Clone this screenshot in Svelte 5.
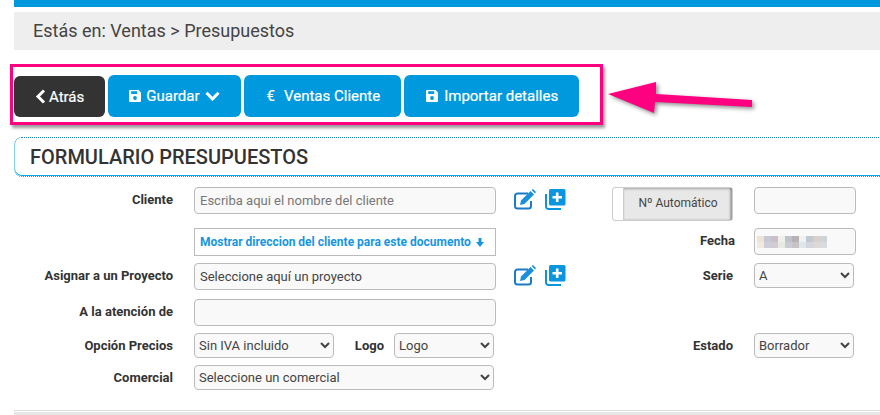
<script>
  // Pixelated date field, one colour per mosaic cell
  const dateCells = [
    "#f1e2d6", "#c6c9d3", "#c9c1c7", "#f0efe9", "#bdc3cd", "#bab1b5", "#eef2f2", "#c3c9d1", "#dacfcb", "#ced3d3",
    "#f3e8e0", "#ccced8", "#d0ccd0", "#e9e9e4", "#c9ccd3", "#c8c3c6", "#dde6e8", "#d3d6db", "#dcd8d6", "#d8dcdc",
  ];
</script>

{#snippet editIcon()}
  <svg class="ico" width="24" height="21" viewBox="0 0 24 21" aria-hidden="true">
    <path d="M15 4.500H4.500A2.500 2.500 0 0 0 2 7v10a2.500 2.500 0 0 0 2.500 2.500h11A2.500 2.500 0 0 0 18 17v-5" fill="none" stroke="#1a7cc4" stroke-width="2"/>
    <path d="M8 11.500 17.500 2l3.500 3.500-9.500 9.500L7 16z" fill="#1a90dc"/>
    <path d="M18.600 1 20 0l3 3-1 1.500z" fill="#1a90dc"/>
  </svg>
{/snippet}

{#snippet plusIcon()}
  <svg class="ico" width="21" height="21" viewBox="0 0 21 21" aria-hidden="true">
    <path d="M1 5v12.500A2.500 2.500 0 0 0 3.500 20H16" fill="none" stroke="#0a96de" stroke-width="2"/>
    <rect x="4" y="0" width="16.500" height="16.500" rx="1.500" fill="#0a96de"/>
    <path d="M12.200 3.500v9.500M7.500 8.250h9.500" stroke="#fff" stroke-width="2.600"/>
  </svg>
{/snippet}

{#snippet saveIcon()}
  <svg width="12" height="12" viewBox="0 0 12 12" aria-hidden="true">
    <path d="M1 0h8.500L12 2.500V11a1 1 0 0 1-1 1H1a1 1 0 0 1-1-1V1a1 1 0 0 1 1-1z" fill="#fff"/>
    <rect x="2.200" y="1.200" width="6" height="2.800" fill="#0099dd"/>
    <circle cx="6" cy="8" r="1.900" fill="#0099dd"/>
  </svg>
{/snippet}

<div class="page">
  <div class="topbar"></div>
  <div class="crumb">Estás en: Ventas &gt; Presupuestos</div>

  <div class="callout">
    <button class="btn dark">
      <svg width="11" height="15" viewBox="0 0 11 15" aria-hidden="true"><path d="M9 1.500 3 7.500l6 6" fill="none" stroke="#fff" stroke-width="3"/></svg>
      <span>Atrás</span>
    </button>
    <button class="btn">
      {@render saveIcon()}
      <span>Guardar</span>
      <svg width="15" height="10" viewBox="0 0 15 10" aria-hidden="true"><path d="M1.500 1.800 7.500 8l6-6.200" fill="none" stroke="#fff" stroke-width="3"/></svg>
    </button>
    <button class="btn wide"><span>€</span><span>Ventas Cliente</span></button>
    <button class="btn import">{@render saveIcon()}<span>Importar detalles</span></button>
  </div>

  <svg class="arrow" width="160" height="50" viewBox="0 0 160 50" aria-hidden="true">
    <path d="M4 16 52 4 52 16 148 22 148 29 51 24 50 35z" fill="#ff0080"/>
  </svg>

  <h2 class="title">FORMULARIO PRESUPUESTOS</h2>

  <form class="form">
    <label class="lbl" for="cliente">Cliente</label>
    <input id="cliente" class="field" placeholder="Escriba aqui el nombre del cliente" />
    <div class="icons">{@render editIcon()}{@render plusIcon()}</div>
    <div class="switch"><span class="knob"></span><span class="state">Nº Automático</span></div>
    <input class="field short" />

    <a class="addr" href="#cliente">
      Mostrar direccion del cliente para este documento
      <svg width="8" height="9" viewBox="0 0 8 9" aria-hidden="true"><path d="M2.500 0h3v4H8L4 9 0 4h2.500z" fill="#1696e0"/></svg>
    </a>
    <label class="lbl right fecha" for="fecha">Fecha</label>
    <div id="fecha" class="field short date">
      <div class="mosaic">
        {#each dateCells as c}<span style="background:{c}"></span>{/each}
      </div>
    </div>

    <label class="lbl" for="proyecto">Asignar a un Proyecto</label>
    <input id="proyecto" class="field" value="Seleccione aquí un proyecto" />
    <div class="icons">{@render editIcon()}{@render plusIcon()}</div>
    <label class="lbl right" for="serie">Serie</label>
    <select id="serie" class="sel narrow"><option>A</option></select>

    <label class="lbl" for="atencion">A la atención de</label>
    <input id="atencion" class="field" />

    <label class="lbl" for="precios">Opción Precios</label>
    <div class="pair">
      <select id="precios" class="sel prices"><option>Sin IVA incluido</option></select>
      <label class="lbl logo" for="logo">Logo</label>
      <select id="logo" class="sel logos"><option>Logo</option></select>
    </div>
    <label class="lbl right" for="estado">Estado</label>
    <select id="estado" class="sel narrow"><option>Borrador</option></select>

    <label class="lbl" for="comercial">Comercial</label>
    <select id="comercial" class="sel full"><option>Seleccione un comercial</option></select>
  </form>

  <div class="foot"></div>
</div>

<style>
  :global(body) {
    margin: 0;
    background: #fff;
    overflow: hidden;
  }
  .page {
    position: relative;
    width: 880px;
    height: 415px;
    overflow: hidden;
    padding-left: 14px;
    box-sizing: border-box;
    font-family: Roboto, "Liberation Sans", sans-serif;
    color: #333;
  }
  .topbar {
    height: 7px;
    background: #0099dd;
  }
  .crumb {
    margin-top: 5px;
    height: 38px;
    padding-left: 19px;
    line-height: 38px;
    background: #eee;
    font-size: 18px;
    color: #444;
  }
  .callout {
    margin: 14px 0 0 -4px;
    width: 593px;
    height: 61px;
    box-sizing: border-box;
    border: 3px solid #ff0080;
    box-shadow: 2px 3px 3px rgba(0, 0, 0, 0.4);
    padding: 8px 0 0 1px;
    display: flex;
    align-items: flex-start;
    gap: 3px;
  }
  .btn {
    height: 42px;
    padding: 0 21px;
    border: 0;
    border-radius: 6px;
    background: #0099dd;
    color: #fff;
    font: 400 15px Roboto, "Liberation Sans", sans-serif;
    -webkit-text-stroke: 0.2px #fff;
    display: flex;
    align-items: center;
    gap: 5px;
  }
  .btn.dark {
    height: 41px;
    margin-top: 1px;
    background: #333;
    padding: 0 21px;
    gap: 3px;
  }
  .btn.wide {
    padding-left: 23px;
    gap: 9px;
  }
  .btn.import {
    padding-left: 22px;
    gap: 6px;
  }
  .arrow {
    position: absolute;
    left: 604px;
    top: 78px;
    filter: drop-shadow(2px 2px 2px rgba(0, 0, 0, 0.45));
  }
  .title {
    margin: 12px -20px 0 0;
    height: 40px;
    box-sizing: border-box;
    padding-left: 15px;
    border: 1px dotted #0aa5e6;
    border-top-color: #1a80b6;
    border-radius: 8px 0 0 8px;
    box-shadow: inset 0 -1px 0 #0aa5e6;
    font-size: 20px;
    font-weight: 500;
    line-height: 39px;
    color: #333;
  }
  .form {
    margin-top: 10px;
    display: grid;
    grid-template-columns: 159px 323px 116px 142px 102px;
    grid-template-rows: 41px 35px 36px 34px 32px 25px;
    align-items: start;
  }
  .lbl {
    grid-column: 1;
    font-size: 13px;
    font-weight: 700;
    line-height: 25px;
    text-align: right;
    color: #333;
  }
  .lbl.right {
    grid-column: 4;
    padding-right: 21px;
  }
  .lbl.fecha {
    padding-right: 19px;
  }
  .field,
  .sel {
    box-sizing: border-box;
    background: #f9f9f9;
    border: 1px solid #bbb;
    border-radius: 4px;
    font: 13px Roboto, "Liberation Sans", sans-serif;
    color: #444;
  }
  .field {
    grid-column: 2;
    width: 302px;
    height: 27px;
    margin-left: 21px;
    padding: 0 5px;
  }
  .field::placeholder {
    color: #777;
  }
  .field.short {
    grid-column: 5;
    width: 102px;
    margin-left: 0;
  }
  .sel {
    height: 25px;
  }
  .icons {
    grid-column: 3;
    display: flex;
    gap: 8px;
    padding: 2px 0 0 17px;
    align-items: flex-start;
  }
  .ico {
    display: block;
  }
  .switch {
    grid-column: 4;
    box-sizing: border-box;
    width: 121px;
    height: 34px;
    display: flex;
    border: 1px solid #ccc;
    border-radius: 3px;
    background: #fff;
  }
  .knob {
    width: 10px;
  }
  .state {
    flex: 1;
    background: #e8e8e8;
    box-shadow: inset -2px 0 2px rgba(0, 0, 0, 0.3), inset 0 2px 2px rgba(0, 0, 0, 0.12);
    border-left: 1px solid #ccc;
    text-align: center;
    font-size: 12px;
    line-height: 30px;
    color: #444;
  }
  .addr {
    grid-column: 2;
    box-sizing: border-box;
    width: 302px;
    height: 28px;
    margin-left: 21px;
    padding-left: 5px;
    border: 1px solid #bbb;
    display: flex;
    align-items: center;
    gap: 5px;
    font-size: 12px;
    font-weight: 700;
    color: #1696e0;
    text-decoration: none;
    white-space: nowrap;
  }
  .field.date {
    padding: 7px 2px 0;
  }
  .mosaic {
    display: grid;
    grid-template-columns: repeat(10, 7px);
    grid-auto-rows: 6px;
  }
  .mosaic span {
    display: block;
  }
  .sel.narrow {
    grid-column: 5;
    width: 100px;
  }
  .pair {
    grid-column: 2;
    margin-left: 21px;
    display: flex;
  }
  .sel.prices {
    width: 140px;
  }
  .lbl.logo {
    width: 60px;
    padding-right: 10px;
    box-sizing: border-box;
  }
  .sel.logos {
    width: 100px;
  }
  .sel.full {
    grid-column: 2;
    width: 300px;
    margin-left: 21px;
  }
  .foot {
    margin: 20px -20px 0 0;
    height: 5px;
    box-sizing: border-box;
    padding-top: 1px;
    border-top: 1px solid #ddd;
    background: #e6e6e6 content-box;
  }
</style>
